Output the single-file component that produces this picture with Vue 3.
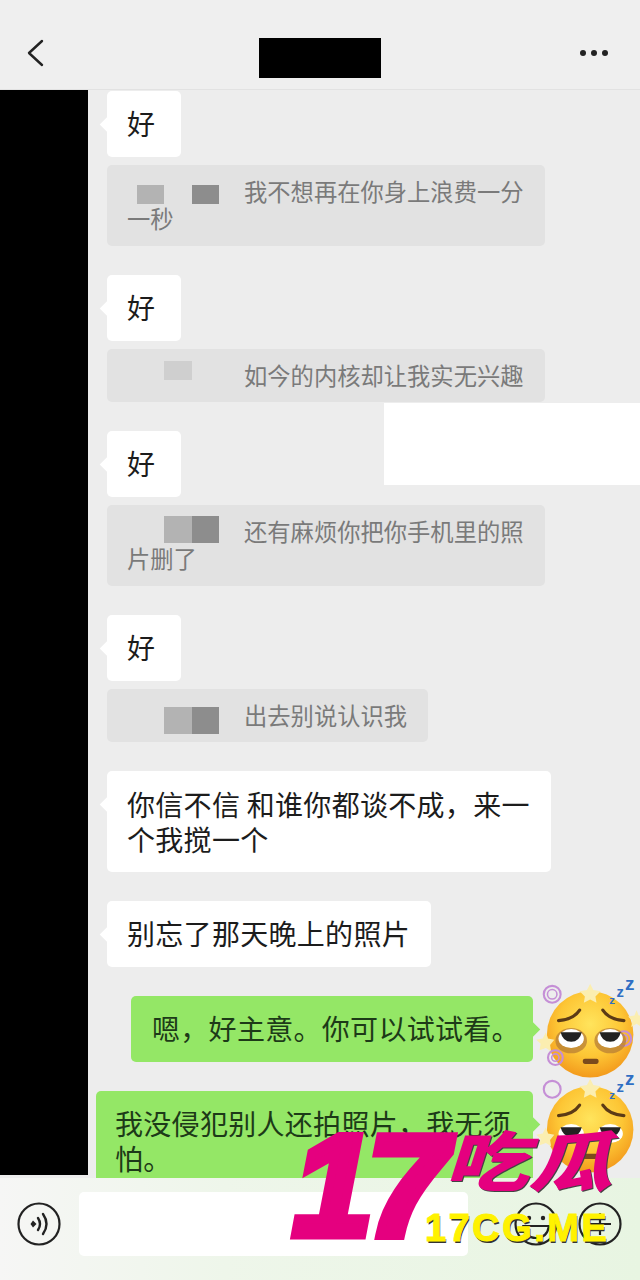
<script setup>
const groups = [
  { quote: '我不想再在你身上浪费一分一秒', tall: true, blocks: [['b-mid', 10, 27, 19], ['b-dark', 28, 27, 19]], top: 0 },
  { quote: '如今的内核却让我实无兴趣', blocks: [['b-light', 37, 28, 19]], top: -8 },
  { quote: '还有麻烦你把你手机里的照片删了', tall: true, blocks: [['b-mid', 37, 28, 27], ['b-dark', 0, 27, 27]], top: -9 },
  { quote: '出去别说认识我', short: true, blocks: [['b-mid', 37, 28, 27], ['b-dark', 0, 27, 27]], top: -2 }
]
const swirls = [[22, 24, 8], [90, 66, 7], [25, 84, 7]]
</script>

<template>
  <div class="phone">
    <header class="top">
      <svg class="back" viewBox="0 0 18 28" width="18" height="28"><path d="M16 2 L3 14 L16 26" fill="none" stroke="#222" stroke-width="2.4" stroke-linecap="round" stroke-linejoin="round"/></svg>
      <div class="title"></div>
      <div class="more"><i></i><i></i><i></i></div>
    </header>

    <div class="main">
      <div class="mask"></div>
      <div class="list">
        <div v-for="(g, i) in groups" :key="i" class="group">
          <div class="bubble white solo">好</div>
          <div class="quote" :class="{ short: g.short, tall: g.tall }">
            <span class="sender">
              <span class="blocks" :style="{ top: g.top + 'px' }">
                <b v-for="(k, j) in g.blocks" :key="j" :class="k[0]" :style="{ marginLeft: k[1] + 'px', width: k[2] + 'px', height: k[3] + 'px' }"></b>
              </span>
            </span>{{ g.quote }}
          </div>
        </div>
        <div class="bubble white wide">你信不信 和谁你都谈不成，来一个我搅一个</div>
        <div class="bubble white fit">别忘了那天晚上的照片</div>
        <div class="mine">
          <div class="bubble green g1">嗯，好主意。你可以试试看。</div>
          <svg class="emoji" viewBox="0 0 110 110" width="116" height="116">
            <defs>
              <radialGradient id="face" cx="50%" cy="38%" r="62%">
                <stop offset="0" stop-color="#ffe45c"/><stop offset=".6" stop-color="#fdc635"/><stop offset="1" stop-color="#f39a1c"/>
              </radialGradient>
            </defs>
            <circle cx="58" cy="62" r="41" fill="url(#face)"/>
            <path d="M58 14l3 6 7 1-5 5 1 6-6-3-6 3 1-6-5-5 7-1zM16 60l2 6 6 1-4 5 1 6-5-3-6 2 1-6-4-4 6-1zM102 39l2 5 6 1-4 4 1 6-5-3-5 3 1-6-4-4 6-1z" fill="#fbeeb0"/>
            <circle v-for="(s, i) in swirls" :key="i" :cx="s[0]" :cy="s[1]" :r="s[2]" fill="none" stroke="#c58fd6" stroke-width="2"/>
            <circle v-for="(s, i) in swirls" :key="'n' + i" :cx="s[0]" :cy="s[1]" :r="s[2] - 3.5" fill="none" stroke="#c58fd6" stroke-width="1.5"/>
            <path d="M28 49q14-1 20-10M70 39q6 9 20 10" fill="none" stroke="#5b3a16" stroke-width="3" stroke-linecap="round"/>
            <ellipse cx="40" cy="68" rx="15" ry="12" fill="#b77d35" opacity=".75"/>
            <ellipse cx="77" cy="68" rx="15" ry="12" fill="#b77d35" opacity=".75"/>
            <ellipse cx="40" cy="66" rx="12" ry="9" fill="#fff"/>
            <ellipse cx="77" cy="66" rx="12" ry="9" fill="#fff"/>
            <path d="M30 60h20q-2 9-10 9t-10-9zM67 60h20q-2 9-10 9t-10-9z" fill="#222"/>
            <rect x="51" y="85" width="15" height="5" rx="2" fill="#7b4a1c"/>
            <text x="76" y="33" class="zz z1">z</text>
            <text x="83" y="27" class="zz z2">z</text>
            <text x="91" y="20" class="zz z3">z</text>
          </svg>
        </div>
        <div class="mine">
          <div class="bubble green g2">我没侵犯别人还拍照片，我无须怕。</div>
          <svg class="emoji" viewBox="0 0 110 110" width="116" height="116">
            <circle cx="58" cy="62" r="41" fill="url(#face)"/>
            <path d="M58 14l3 6 7 1-5 5 1 6-6-3-6 3 1-6-5-5 7-1zM16 60l2 6 6 1-4 5 1 6-5-3-6 2 1-6-4-4 6-1z" fill="#fbeeb0"/>
            <circle cx="22" cy="24" r="8" fill="none" stroke="#c58fd6" stroke-width="2"/>
            <path d="M28 49q14-1 20-10M70 39q6 9 20 10" fill="none" stroke="#5b3a16" stroke-width="3" stroke-linecap="round"/>
            <ellipse cx="40" cy="66" rx="12" ry="9" fill="#fff"/>
            <ellipse cx="77" cy="66" rx="12" ry="9" fill="#fff"/>
            <path d="M30 60h20q-2 9-10 9t-10-9zM67 60h20q-2 9-10 9t-10-9z" fill="#222"/>
            <rect x="51" y="85" width="15" height="5" rx="2" fill="#7b4a1c"/>
            <text x="76" y="33" class="zz z1">z</text>
            <text x="83" y="27" class="zz z2">z</text>
            <text x="91" y="20" class="zz z3">z</text>
          </svg>
        </div>
      </div>
    </div>

    <footer class="bar">
      <svg class="voice" viewBox="0 0 44 44" width="44" height="44">
        <circle cx="22" cy="22" r="20.5" fill="none" stroke="#222" stroke-width="2.2"/>
        <path d="M14 18.5l3.5 3.5-3.5 3.5-2.5-3.5z" fill="#222" transform="translate(2 0)"/>
        <path d="M21 16q4 6 0 12M26 12q7 10 0 20" fill="none" stroke="#222" stroke-width="2.4" stroke-linecap="round"/>
      </svg>
      <div class="input"></div>
      <svg class="smile" viewBox="0 0 44 44" width="44" height="44">
        <circle cx="22" cy="22" r="20.5" fill="none" stroke="#222" stroke-width="2.2"/>
        <circle cx="15" cy="16" r="2.2" fill="#222"/><circle cx="29" cy="16" r="2.2" fill="#222"/>
        <path d="M9 24h26q-2 12-13 12T9 24z" fill="none" stroke="#222" stroke-width="2.2" stroke-linejoin="round"/>
      </svg>
      <svg class="plus" viewBox="0 0 44 44" width="44" height="44">
        <circle cx="22" cy="22" r="20.5" fill="none" stroke="#222" stroke-width="2.2"/>
        <path d="M22 11v22M11 22h22" stroke="#222" stroke-width="2.2"/>
      </svg>
    </footer>

    <div class="cover"></div>
    <div class="mark">
      <span class="num">17</span>
      <span class="cn">吃瓜</span>
      <span class="site">17CG.ME</span>
    </div>
  </div>
</template>

<style>
html, body { margin: 0; background: #ededed; }
</style>

<style scoped>
.phone {
  position: relative;
  width: 640px;
  height: 1280px;
  overflow: hidden;
  display: flex;
  flex-direction: column;
  background: #ededed;
  font-family: "Noto Sans CJK SC", "Noto Sans", sans-serif;
}
.top {
  flex: 0 0 90px;
  box-sizing: border-box;
  border-bottom: 1px solid #e2e2e2;
  background: #efefef;
  display: flex;
  align-items: flex-start;
  justify-content: space-between;
  padding: 39px 32px 0 26px;
}
.title { width: 122px; height: 40px; margin-top: -1px; margin-left: 16px; background: #000; }
.more { display: flex; gap: 5px; margin-top: 11px; }
.more i { width: 6px; height: 6px; border-radius: 50%; background: #222; }
.main { flex: 0 0 1088px; display: flex; overflow: hidden; align-items: flex-start; }
.mask { flex: 0 0 88px; height: 1085px; background: #000; }
.list {
  flex: 1;
  display: flex;
  flex-direction: column;
  align-items: flex-start;
  gap: 29px;
  padding-left: 19px;
  padding-top: 1px;
}
.group { display: flex; flex-direction: column; align-items: flex-start; gap: 8px; }
.bubble {
  position: relative;
  box-sizing: border-box;
  border-radius: 5px;
  font-size: 28px;
  line-height: 35px;
  padding: 15px 20px;
  color: #1c1c1c;
}
.bubble::before {
  content: "";
  position: absolute;
  width: 11px;
  height: 11px;
  top: 28px;
  transform: rotate(45deg);
  background: inherit;
}
.white { background: #fff; letter-spacing: 0.3px; }
.white::before { left: -5px; }
.solo { width: 74px; height: 66px; }
.wide { width: 444px; height: 101px; padding-top: 16px; }
.fit { width: 324px; height: 66px; white-space: nowrap; }
.quote {
  box-sizing: border-box;
  width: 438px;
  height: 53px;
  background: #e2e2e2;
  border-radius: 5px;
  padding: 13px 20px;
  color: #7a7a7a;
  font-size: 23.3px;
  line-height: 27px;
}
.quote.tall { height: 81px; }
.quote.short { width: 321px; }
.sender { position: relative; display: inline-block; width: 117px; height: 20px; vertical-align: middle; }
.blocks { position: absolute; left: 0; display: flex; }
.blocks b { display: block; filter: blur(0.6px); }
.b-light { background: #cfcfcf; }
.b-mid { background: #b3b3b3; }
.b-dark { background: #8d8d8d; }
.mine { position: relative; width: 445px; margin-left: -19px; display: flex; justify-content: flex-end; }
.mine .bubble { color: #1d3a18; }
.green { background: #94e766; letter-spacing: 0.3px; }
.green::before { right: -5px; }
.g1 { width: 402px; height: 66px; white-space: nowrap; padding-left: 21px; }
.g2 { width: 437px; height: 120px; padding: 15px 19px; }
.emoji { position: absolute; left: 441px; top: -27px; }
.zz { font-family: "Liberation Sans", sans-serif; font-weight: 700; fill: #2f6fc4; }
.z1 { font-size: 11px; }
.z2 { font-size: 14px; }
.z3 { font-size: 18px; }
.bar {
  flex: 1;
  display: flex;
  align-items: center;
  padding-left: 17px;
  padding-bottom: 10px;
  background: linear-gradient(90deg, #f6f6f5 0%, #eef6ea 35%, #e8f5e2 100%);
  position: relative;
  z-index: 1;
}
.input { width: 389px; height: 64px; margin-left: 18px; background: #fff; border-radius: 5px; }
.smile { margin-left: 46px; }
.plus { margin-left: 20px; }
.cover { position: absolute; left: 384px; top: 403px; width: 256px; height: 82px; background: #fff; }
.mark { position: absolute; left: 278px; top: 1120px; width: 350px; height: 130px; z-index: 2; }
.num {
  position: absolute;
  left: 15px;
  top: -19px;
  font-family: "Liberation Sans", sans-serif;
  font-size: 143px;
  line-height: 170px;
  font-weight: 700;
  font-style: italic;
  letter-spacing: -5px;
  color: #e5007f;
  -webkit-text-stroke: 9px #e5007f;
  text-shadow: 2px 3px 0 #333;
}
.cn {
  position: absolute;
  left: 166px;
  top: 5px;
  font-family: "Noto Sans CJK SC", sans-serif;
  font-size: 84px;
  line-height: 84px;
  font-weight: 900;
  font-style: italic;
  color: #e5007f;
  transform: scaleY(0.78);
  transform-origin: top left;
  text-shadow: 1px 2px 0 #444;
}
.site {
  position: absolute;
  left: 147px;
  top: 88px;
  font-family: "Liberation Sans", sans-serif;
  font-size: 38px;
  line-height: 40px;
  font-weight: 700;
  letter-spacing: 2.5px;
  color: #fff200;
  -webkit-text-stroke: 1px #fff200;
  text-shadow: 1px 2px 0 #333;
}
</style>
